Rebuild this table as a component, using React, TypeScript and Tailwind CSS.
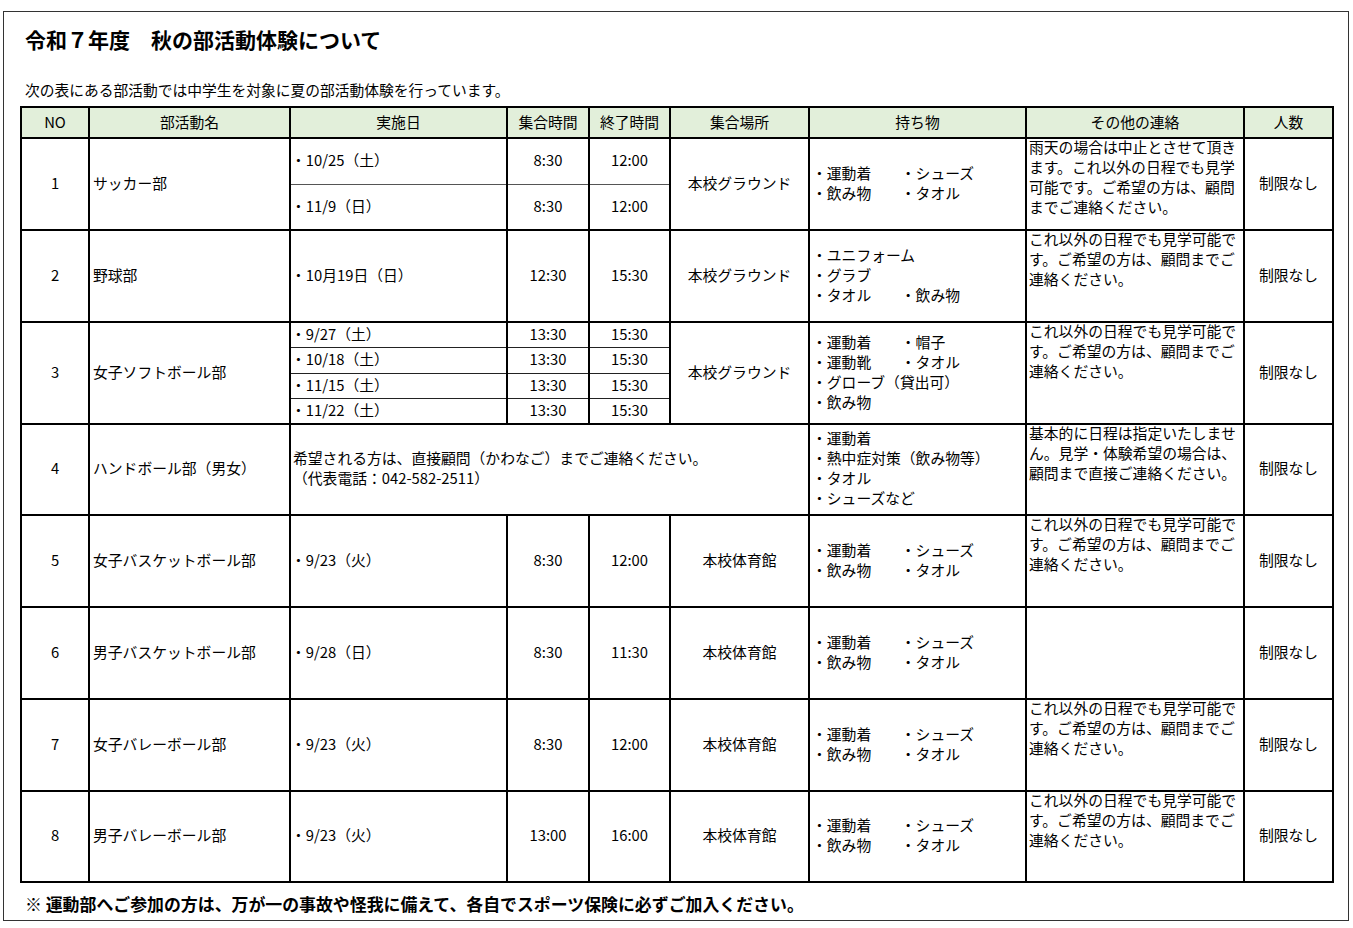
import React from "react";

const F = "font-['Noto_Sans_CJK_JP','Noto_Sans',sans-serif]";

function C({ children, className = "" }: { children?: React.ReactNode; className?: string }) {
  return <div className={`bg-white flex items-center pb-[3px] ${className}`}>{children}</div>;
}

function Notes({ lines }: { lines: string[] }) {
  return (
    <div className="bg-white pl-[2px] pt-0 leading-[20px] whitespace-pre">
      <div className="-mt-[2px]">
        {lines.map((l, i) => (
          <div key={i}>{l}</div>
        ))}
      </div>
    </div>
  );
}

function Items({ lines }: { lines: string[] }) {
  return (
    <C className="pl-[2px]">
      <div className="leading-[20px] whitespace-pre">
        {lines.map((l, i) => (
          <div key={i}>{l}</div>
        ))}
      </div>
    </C>
  );
}

function Subs({ items, center = false, line = "border-[#444]" }: { items: string[]; center?: boolean; line?: string }) {
  return (
    <div className="bg-white flex flex-col">
      {items.map((t, i) => (
        <div
          key={i}
          className={`flex-1 flex items-center pb-[2px] ${center ? "justify-center" : "pl-0"} ${i > 0 ? `border-t ${line}` : ""}`}
        >
          {t}
        </div>
      ))}
    </div>
  );
}

const std = ["これ以外の日程でも見学可能で", "す。ご希望の方は、顧問までご", "連絡ください。"];
const twoItems = ["・運動着　　・シューズ", "・飲み物　　・タオル"];

function SimpleRow({ no, name, date, start, end, place, notes }: { no: string; name: string; date: string; start: string; end: string; place: string; notes: string[] }) {
  return (
    <>
      <C className="justify-center">{no}</C>
      <C className="pl-[3px]">{name}</C>
      <C>{date}</C>
      <C className="justify-center">{start}</C>
      <C className="justify-center">{end}</C>
      <C className="justify-center">{place}</C>
      <Items lines={twoItems} />
      <Notes lines={notes} />
      <C className="justify-center">制限なし</C>
    </>
  );
}

export default function App() {
  return (
    <div className={`w-[1353px] h-[928px] bg-white text-black ${F} overflow-hidden`}>
      <div className="ml-[3px] mt-[11px] w-[1346px] h-[910px] border border-[#333] flex flex-col">
        <div className="pl-[21px] mt-[13px] text-[21px] font-bold leading-[28px]">令和７年度　秋の部活動体験について</div>
        <div className="pl-[21px] mt-[27px] text-[14.75px] leading-[20px]">次の表にある部活動では中学生を対象に夏の部活動体験を行っています。</div>
        <div className="ml-[16px] mt-[6px] w-[1314px] grid grid-cols-[66px_199px_215px_80px_79px_137px_215px_216px_87px] grid-rows-[29px_90px_90px_100px_89px_90px_90px_90px_89px] gap-[2px] p-[2px] bg-black text-[14.8px] leading-[20px]">
          {["NO", "部活動名", "実施日", "集合時間", "終了時間", "集合場所", "持ち物", "その他の連絡", "人数"].map((h) => (
            <div key={h} className="bg-[#e2efda] flex items-center justify-center pb-[2px]">{h}</div>
          ))}

          {/* Row 1 */}
          <C className="justify-center">1</C>
          <C className="pl-[3px]">サッカー部</C>
          <Subs items={["・10/25（土）", "・11/9（日）"]} line="border-[#555]" />
          <Subs items={["8:30", "8:30"]} center line="border-[#555]" />
          <Subs items={["12:00", "12:00"]} center line="border-[#555]" />
          <C className="justify-center">本校グラウンド</C>
          <Items lines={twoItems} />
          <Notes lines={["雨天の場合は中止とさせて頂き", "ます。これ以外の日程でも見学", "可能です。ご希望の方は、顧問", "までご連絡ください。"]} />
          <C className="justify-center">制限なし</C>

          {/* Row 2 */}
          <C className="justify-center">2</C>
          <C className="pl-[3px]">野球部</C>
          <C>・10月19日（日）</C>
          <C className="justify-center">12:30</C>
          <C className="justify-center">15:30</C>
          <C className="justify-center">本校グラウンド</C>
          <Items lines={["・ユニフォーム", "・グラブ", "・タオル　　・飲み物"]} />
          <Notes lines={std} />
          <C className="justify-center">制限なし</C>

          {/* Row 3 */}
          <C className="justify-center">3</C>
          <C className="pl-[3px]">女子ソフトボール部</C>
          <Subs items={["・9/27（土）", "・10/18（土）", "・11/15（土）", "・11/22（土）"]} line="border-[#222]" />
          <Subs items={["13:30", "13:30", "13:30", "13:30"]} center line="border-[#222]" />
          <Subs items={["15:30", "15:30", "15:30", "15:30"]} center line="border-[#222]" />
          <C className="justify-center">本校グラウンド</C>
          <Items lines={["・運動着　　・帽子", "・運動靴　　・タオル", "・グローブ（貸出可）", "・飲み物"]} />
          <Notes lines={std} />
          <C className="justify-center">制限なし</C>

          {/* Row 4 */}
          <C className="justify-center">4</C>
          <C className="pl-[3px]">ハンドボール部（男女）</C>
          <C className="col-span-4 pl-[2px]">
            <div className="leading-[20px] -mt-[1px]">
              <div>希望される方は、直接顧問（かわなご）までご連絡ください。</div>
              <div>（代表電話：042-582-2511）</div>
            </div>
          </C>
          <Items lines={["・運動着", "・熱中症対策（飲み物等）", "・タオル", "・シューズなど"]} />
          <Notes lines={["基本的に日程は指定いたしませ", "ん。見学・体験希望の場合は、", "顧問まで直接ご連絡ください。"]} />
          <C className="justify-center">制限なし</C>

          <SimpleRow no="5" name="女子バスケットボール部" date="・9/23（火）" start="8:30" end="12:00" place="本校体育館" notes={std} />
          <SimpleRow no="6" name="男子バスケットボール部" date="・9/28（日）" start="8:30" end="11:30" place="本校体育館" notes={[]} />
          <SimpleRow no="7" name="女子バレーボール部" date="・9/23（火）" start="8:30" end="12:00" place="本校体育館" notes={std} />
          <SimpleRow no="8" name="男子バレーボール部" date="・9/23（火）" start="13:00" end="16:00" place="本校体育館" notes={std} />
        </div>
        <div className="pl-[21px] mt-[9px] text-[16.9px] font-bold leading-[24px]">※ 運動部へご参加の方は、万が一の事故や怪我に備えて、各自でスポーツ保険に必ずご加入ください。</div>
      </div>
    </div>
  );
}
